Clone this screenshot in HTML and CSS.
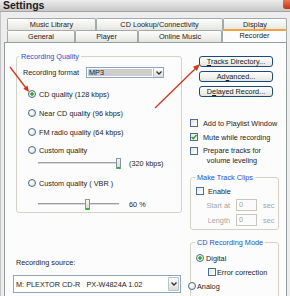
FILE: index.html
```html
<!DOCTYPE html>
<html>
    <head>
        <title>Settings</title>
        <link rel="stylesheet" href="styles.css">
    </head>
    <body>
        <div class="window">
            <div class="titlebar">
                <span class="title">Settings</span>
                <span class="close"></span>
            </div>
            <div class="frame">
                <div class="tabrow">
                    <div class="tab w89">Music Library</div>
                    <div class="tab w127">CD Lookup/Connectivity</div>
                    <div class="tab w64">Display</div>
                </div>
                <div class="tabrow">
                    <div class="tab w68">General</div>
                    <div class="tab w63">Player</div>
                    <div class="tab w84">Online Music</div>
                    <div class="tab w65 active">Recorder</div>
                </div>
                <div class="panel">
                    <!-- left column -->
                    <div class="colLeft">
                        <fieldset class="group quality">
                            <legend>Recording Quality</legend>
                            <div class="formatRow">
                                <span class="formatLabel">Recording format</span>
                                <div class="combo small grey">
                                    <span class="comboValue">MP3</span>
                                    <span class="comboBtn"><svg width="6" height="4" viewBox="0 0 6 4"><polyline points="0.5,0.5 3,3 5.5,0.5" fill="none" stroke="#333" stroke-width="1.3"/></svg></span>
                                </div>
                            </div>
                            <div class="opt r1"><span class="radio on"></span>CD quality (128 kbps)</div>
                            <div class="opt r2"><span class="radio"></span>Near CD quality (96 kbps)</div>
                            <div class="opt r3"><span class="radio"></span>FM radio quality (64 kbps)</div>
                            <div class="opt r4"><span class="radio"></span>Custom quality</div>
                            <div class="sliderRow s1">
                                <div class="track"><span class="thumb" style="left:78px"></span></div>
                                <span class="sliderValue">(320 kbps)</span>
                            </div>
                            <div class="opt r5"><span class="radio"></span>Custom quality ( VBR )</div>
                            <div class="sliderRow s2">
                                <div class="track"><span class="thumb" style="left:47px"></span></div>
                                <span class="sliderValue">60 %</span>
                            </div>
                        </fieldset>
                        <div class="sourceLabel">Recording source:</div>
                        <div class="combo wide">
                            <span class="comboValue">M: PLEXTOR CD-R&nbsp;&nbsp;&nbsp;PX-W4824A 1.02</span>
                            <span class="comboBtn"><svg width="6" height="4" viewBox="0 0 6 4"><polyline points="0.5,0.5 3,3 5.5,0.5" fill="none" stroke="#333" stroke-width="1.3"/></svg></span>
                        </div>
                    </div>
                    <!-- right column -->
                    <div class="colRight">
                        <div class="btn b1"><u>T</u>racks Directory...</div>
                        <div class="btn b2">Ad<u>v</u>anced...</div>
                        <div class="btn b3">D<u>e</u>layed Record...</div>

                        <div class="check c1"><span class="box"></span>Add to Playlist Window</div>
                        <div class="check c2"><span class="box"><svg width="6" height="6" viewBox="0 0 6 6"><polyline points="0.6,3 2.3,4.8 5.4,1" fill="none" stroke="#21a121" stroke-width="1.4"/></svg></span>Mute while recording</div>
                        <div class="check c3"><span class="box"></span><span class="multi">Prepare tracks for<br>volume leveling</span></div>

                        <fieldset class="group clips">
                            <legend>Make Track Clips</legend>
                            <div class="check enable"><span class="box"></span>Enable</div>
                            <div class="fieldRow f1">
                                <span class="fieldLabel">Start at</span>
                                <span class="input">0</span>
                                <span class="unit">sec</span>
                            </div>
                            <div class="fieldRow f2">
                                <span class="fieldLabel">Length</span>
                                <span class="input">0</span>
                                <span class="unit">sec</span>
                            </div>
                        </fieldset>

                        <fieldset class="group mode">
                            <legend>CD Recording Mode</legend>
                            <div class="opt digital"><span class="radio on"></span>Digital</div>
                            <div class="check errors"><span class="box"></span>Error correction</div>
                            <div class="opt analog"><span class="radio"></span>Analog</div>
                        </fieldset>
                    </div>
                </div>
            </div>
            <svg class="arrows" width="290" height="296" viewBox="0 0 290 296">
                <line x1="10" y1="67" x2="26" y2="88" stroke="#d0381c" stroke-width="1.3"/>
                <polygon points="29,92 23.3,88.8 27.5,85.6" fill="#d0381c"/>
                <line x1="155" y1="108" x2="196" y2="68" stroke="#d0381c" stroke-width="1.3"/>
                <polygon points="200,64 196.9,70.9 193,66.8" fill="#d0381c"/>
            </svg>
        </div>
    </body>
</html>
```

FILE: styles.css
```css
html,body {
    margin:0;
}
body {
    width:290px;
    height:296px;
    overflow:hidden;
    background:#e6e6e6;
    font-family:"Liberation Sans", Arial, sans-serif;
    font-size:7.3px;
    line-height:9px;
    color:#1c1c1c;
}
.window {
    position:relative;
    height:296px;
}
/* title bar */
.titlebar {
    height:11px;
    display:flex;
    align-items:center;
    background:linear-gradient(#ececec, #c8c8c8);
    border-bottom:1px solid #a4a4a4;
}
.title {
    padding-left:3px;
    font-size:10.5px;
    font-weight:700;
    line-height:11px;
    color:#202020;
}
.close {
    margin-left:auto;
    align-self:flex-start;
    width:7px;
    height:9px;
    border-radius:0 0 0 3px;
    background:linear-gradient(#e87858, #c4300f);
}
.frame {
    padding:6px 3px 0 3px;
    border-left:1px solid #c4c4c4;
    background:#ededed;
    height:284px;
    box-sizing:border-box;
}
/* tabs */
.tabrow {
    display:flex;
    height:12px;
    margin-left:3px;
}
.tab {
    box-sizing:border-box;
    height:12px;
    border:1px solid #a3aaac;
    border-bottom:none;
    border-radius:2px 2px 0 0;
    background:linear-gradient(#fefefe, #e4e4df);
    text-align:center;
    line-height:11px;
    white-space:nowrap;
}
.tab.active {
    position:relative;
    z-index:1;
    height:13px;
    margin-top:-1px;
    border-top:2px solid #f2a33a;
    background:#fcfcfd;
    line-height:10px;
}
.w89 { width:89px; }
.w127 { width:127px; }
.w64 { width:64px; }
.w68 { width:68px; }
.w63 { width:63px; }
.w84 { width:84px; }
.w65 { width:65px; }
.panel {
    display:flex;
    height:260px;
    padding-left:8px;
    border:1px solid #959d9f;
    border-bottom:none;
    background:#fcfcfd;
}
.colLeft {
    width:169px;
    flex:none;
}
.colRight {
    width:92px;
    margin-left:5px;
    flex:none;
}
/* group boxes */
.group {
    margin:0;
    padding:0;
    min-width:0;
    border:1px solid #d3d3c6;
    border-radius:3px;
    box-sizing:border-box;
}
.group legend {
    margin-left:2px;
    padding:0 2px;
    line-height:9px;
    color:#2252cc;
}
.quality {
    width:166px;
    margin:9px 0 0 3px;
    padding-bottom:3px;
}
.formatRow {
    display:flex;
    align-items:center;
    height:11px;
    margin-top:6px;
    padding-left:6px;
}
.formatLabel {
    width:63px;
}
/* combo boxes */
.combo {
    display:flex;
    box-sizing:border-box;
    border:1px solid #8ea6bf;
    background:#fff;
}
.combo.small {
    width:78px;
    height:11px;
}
.combo.wide {
    width:168px;
    height:18px;
    margin-top:7px;
}
.comboValue {
    flex:1;
    padding-left:2px;
    display:flex;
    align-items:center;
    white-space:nowrap;
}
.combo.grey .comboValue {
    margin:1px;
    padding-left:1px;
    background:#cdcdcd;
}
.comboBtn {
    width:9px;
    margin:1px;
    display:flex;
    align-items:center;
    justify-content:center;
    border:1px solid #b9c3cc;
    border-radius:1px;
    background:linear-gradient(#fbfbfb, #dedede);
}
.combo.small .comboBtn {
    margin:0;
    border-width:0 0 0 1px;
}
/* radio options */
.opt {
    display:flex;
    align-items:center;
    height:10px;
    padding-left:11px;
    white-space:nowrap;
}
.radio {
    flex:none;
    box-sizing:border-box;
    width:8px;
    height:8px;
    margin-right:3px;
    border:1px solid #4a6a8e;
    border-radius:50%;
    background:radial-gradient(circle at 40% 40%, #ffffff, #dcdcd3);
}
.radio.on {
    background:radial-gradient(circle, #2ea52e 0, #2ea52e 1.4px, #f4f4ee 2px);
}
.r1 { margin-top:11px; }
.r2 { margin-top:9px; }
.r3 { margin-top:9px; }
.r4 { margin-top:8px; }
.r5 { margin-top:10px; }
/* sliders */
.sliderRow {
    display:flex;
    align-items:center;
    height:10px;
    padding-left:21px;
}
.s1 { margin-top:3px; }
.s2 { margin-top:11px; }
.track {
    position:relative;
    width:81px;
    height:1px;
    border-top:1px solid #a0a0a0;
    border-bottom:1px solid #ffffff;
    background:#d8d8d8;
}
.thumb {
    position:absolute;
    top:-5px;
    width:3px;
    height:8px;
    border:1px solid #8796a2;
    border-bottom:2px solid #3fae3f;
    border-radius:1px;
    background:linear-gradient(#f6f6f2, #dcdcd4);
}
.sliderValue {
    margin-left:10px;
}
.sourceLabel {
    margin-top:45px;
    padding-left:3px;
    line-height:10px;
}
/* buttons */
.btn {
    box-sizing:border-box;
    width:74px;
    height:11px;
    margin-left:12px;
    border:1px solid #1d4a7a;
    border-radius:3px;
    background:linear-gradient(#ffffff, #e6e6de);
    text-align:center;
    line-height:9px;
}
.b1 { margin-top:13px; }
.b2, .b3 { margin-top:4px; }
/* checkboxes */
.check {
    display:flex;
    align-items:center;
    min-height:10px;
    padding-left:3px;
    white-space:nowrap;
}
.box {
    flex:none;
    box-sizing:border-box;
    width:8px;
    height:8px;
    margin-right:5px;
    display:flex;
    align-items:center;
    justify-content:center;
    border:1px solid #4e6e92;
    background:linear-gradient(135deg, #e6e6de, #ffffff);
}
.c1 { margin-top:21px; }
.c2 { margin-top:4px; }
.c3 {
    margin-top:4px;
    align-items:flex-start;
}
.c3 .box {
    margin-top:1px;
}
.multi {
    text-align:center;
    line-height:10px;
}
.clips {
    width:89px;
    margin:7px 0 0 3px;
    padding-bottom:3px;
}
.clips legend {
    margin-left:4px;
}
.enable {
    margin-top:4px;
    padding-left:5px;
}
.enable .box {
    margin-right:4px;
}
.fieldRow {
    display:flex;
    align-items:center;
    height:12px;
    margin-top:3px;
    color:#a5a5a5;
}
.fieldLabel {
    width:39px;
    text-align:right;
}
.input {
    box-sizing:border-box;
    width:21px;
    height:12px;
    margin-left:6px;
    padding-left:2px;
    border:1px solid #c9c7bb;
    background:#fbfbfb;
    line-height:10px;
}
.unit {
    margin-left:6px;
}
.mode {
    width:89px;
    margin:8px 0 0 3px;
    padding-bottom:12px;
}
.mode legend {
    margin-left:4px;
}
.digital {
    margin-top:6px;
    padding-left:5px;
}
.digital .radio {
    margin-right:2px;
}
.errors {
    margin-top:4px;
    padding-left:17px;
}
.errors .box {
    margin-right:1px;
}
.analog {
    margin-top:4px;
    padding-left:0;
    margin-left:-3px;
}
.analog .radio {
    margin-right:1px;
}
/* annotation arrows lying over the dialog */
.arrows {
    position:absolute;
    left:0;
    top:0;
    pointer-events:none;
}
```
